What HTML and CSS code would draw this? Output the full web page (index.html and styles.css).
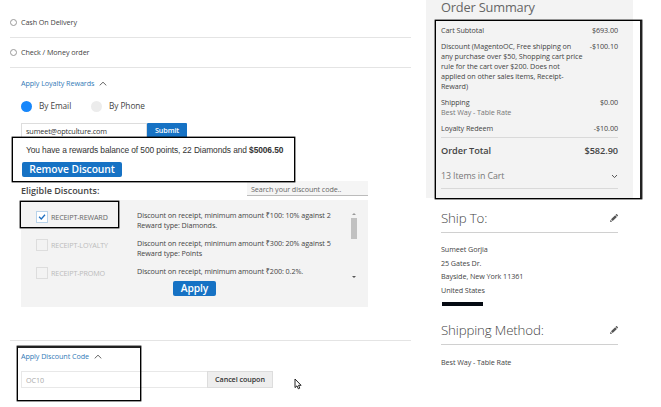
FILE: index.html
```html
<!DOCTYPE html>
<html lang="en">
<head>
<meta charset="utf-8">
<title>Checkout</title>
<link rel="stylesheet" href="styles.css">
</head>
<body>
<div class="page">
  <main class="payment">
    <label class="method first"><span class="radio"></span>Cash On Delivery</label>
    <label class="method"><span class="radio"></span>Check / Money order</label>
    <section class="loyalty">
      <h3 class="toggle">Apply Loyalty Rewards <svg class="caret" viewBox="0 0 8 5"><path d="M.7 4.4 4 1.2l3.3 3.2"/></svg></h3>
      <div class="choices">
        <span class="dot on"></span><span class="by-email">By Email</span>
        <span class="dot"></span><span class="by-phone">By Phone</span>
      </div>
      <div class="email-row">
        <div class="field">sumeet@optculture.com</div>
        <div class="btn submit">Submit</div>
      </div>
      <p class="balance">You have a rewards balance of 500 points, 22 Diamonds and <b>$5006.50</b></p>
      <div class="btn remove">Remove Discount</div>
      <div class="eligible-head">
        <h4>Eligible Discounts:</h4>
        <div class="search">Search your discount code..</div>
      </div>
      <div class="panel">
        <div class="list">
          <div class="rewards">
            <div class="reward active">
              <span class="check"><svg viewBox="0 0 11 11"><path d="M2.3 5.2 4.7 7.7 8.8 3"/></svg></span>
              <span class="name">RECEIPT-REWARD</span>
              <p>Discount on receipt, minimum amount ₹100: 10% against 2<br>Reward type: Diamonds.</p>
            </div>
            <div class="reward">
              <span class="check"></span><span class="name">RECEIPT-LOYALTY</span>
              <p>Discount on receipt, minimum amount ₹300: 20% against 5<br>Reward type: Points</p>
            </div>
            <div class="reward">
              <span class="check"></span><span class="name">RECEIPT-PROMO</span>
              <p>Discount on receipt, minimum amount ₹200: 0.2%.</p>
            </div>
          </div>
          <div class="scroll"><i class="up"></i><i class="thumb"></i><i class="down"></i></div>
        </div>
        <div class="btn apply">Apply</div>
      </div>
    </section>
    <section class="coupon">
      <h3 class="toggle code">Apply Discount Code <svg class="caret" viewBox="0 0 8 5"><path d="M.7 4.4 4 1.2l3.3 3.2"/></svg></h3>
      <div class="coupon-row">
        <div class="coupon-field">OC10</div>
        <div class="cancel">Cancel coupon</div>
      </div>
    </section>
  </main>
  <aside class="side">
    <section class="summary">
      <h2>Order Summary</h2>
      <div class="line"><span>Cart Subtotal</span><span>$693.00</span></div>
      <div class="line"><span>Discount (MagentoOC, Free shipping on<br>any purchase over $50, Shopping cart price<br>rule for the cart over $200. Does not<br>applied on other sales items, Receipt-<br>Reward)</span><span>-$100.10</span></div>
      <div class="line"><span>Shipping<br><em>Best Way - Table Rate</em></span><span>$0.00</span></div>
      <div class="line"><span>Loyalty Redeem</span><span>-$10.00</span></div>
      <div class="total"><span>Order Total</span><span>$582.90</span></div>
      <div class="items"><span>13 Items in Cart</span><svg class="chevron" viewBox="0 0 7 5"><path d="M1 1l2.5 2.6L6 1"/></svg></div>
    </section>
    <section class="block">
      <h2>Ship To:<svg class="pencil" viewBox="0 0 8 8"><path d="M0 8 .6 5.8 2.2 7.4zM1 5.3 5.2 1.2 6.9 2.9 2.7 7zM5.6.8 6.3.1Q6.6-.1 6.9.2L7.8 1.1Q8.1 1.4 7.9 1.7L7.2 2.4z"/></svg></h2>
      <address>Sumeet Gorjia<br>25 Gates Dr.<br>Bayside, New York 11361<br>United States<span class="redacted"></span></address>
    </section>
    <section class="block shipping">
      <h2>Shipping Method:<svg class="pencil" viewBox="0 0 8 8"><path d="M0 8 .6 5.8 2.2 7.4zM1 5.3 5.2 1.2 6.9 2.9 2.7 7zM5.6.8 6.3.1Q6.6-.1 6.9.2L7.8 1.1Q8.1 1.4 7.9 1.7L7.2 2.4z"/></svg></h2>
      <p>Best Way - Table Rate</p>
    </section>
  </aside>
</div>
<div class="mark mark-balance"></div>
<div class="mark mark-reward"></div>
<div class="mark mark-code"></div>
<div class="mark mark-summary"></div>
<svg class="cursor" viewBox="0 0 8 12"><path d="M1 1v8.6l2-1.8 1.3 3 1.5-.7-1.3-2.8h2.6z"/></svg>
</body>
</html>
```
FILE: styles.css
```css
* { box-sizing: border-box; margin: 0; padding: 0; }
body {
  width: 661px; height: 407px; overflow: hidden; position: relative;
  background: #fff; color: #444; white-space: nowrap; letter-spacing: -0.075px;
  font: 7.2px/10.1px "Open Sans", "Noto Sans", sans-serif;
}
.page { display: flex; height: 407px; }

.payment { width: 401px; margin-left: 10px; }
.method { display: flex; align-items: center; height: 30px; border-bottom: 1px solid #e4e4e4; }
.method.first { height: 38px; padding-top: 7px; }
.radio { width: 7px; height: 7px; margin-right: 4px; border: 1px solid #999; border-radius: 50%; }

.loyalty { padding-left: 11px; height: 262px; }
.toggle { display: flex; align-items: center; gap: 5px; height: 10px; color: #337ab7; font-size: 7.2px; font-weight: 400; }
.caret { width: 8px; height: 5px; fill: none; stroke: #666; stroke-width: 1; }
.loyalty .toggle { margin-top: 10px; }
.choices { display: flex; align-items: center; height: 11px; margin-top: 13px; font-size: 8.3px; }
.dot { width: 11px; height: 11px; border-radius: 50%; background: #ececec; }
.dot.on { background: #1787fb; }
.by-email { width: 52px; margin-left: 7px; }
.by-phone { margin-left: 7px; }
.email-row { display: flex; height: 15px; margin-top: 11px; }
.field { width: 126px; padding: 2px 0 0 4px; border: 1px solid #ddd; font-size: 7.3px; letter-spacing: -0.15px; color: #333; }
.btn { display: flex; align-items: center; justify-content: center; background: #1672c4; color: #fff; border-radius: 2px; font-weight: 600; }
.submit { width: 40px; font-size: 7.2px; border-radius: 1px; }
.balance { height: 12px; margin-top: 6px; padding-left: 5px; font: 8.4px/12px "Liberation Sans", sans-serif; letter-spacing: -0.09px; color: #333; }
.remove { width: 100px; height: 15px; margin-top: 6px; margin-left: 1px; font-size: 10.3px; }
.eligible-head { display: flex; justify-content: space-between; width: 347px; height: 15px; margin-top: 4px; }
.eligible-head h4 { font-size: 9px; line-height: 20px; font-weight: 600; letter-spacing: 0; }
.search { width: 121px; padding: 3px 0 0 4px; background: #f5f5f5; border-bottom: 1px solid #bbb; color: #666; }
.panel { width: 347px; height: 107px; margin-top: 4px; padding-top: 10px; background: #f3f3f3; }
.list { display: flex; height: 71px; justify-content: space-between; }
.rewards { width: 320px; padding-left: 15px; }
.reward { display: flex; height: 28px; color: #bbb; }
.check { width: 12px; height: 12px; margin: 1px 3px 0 0; border: 1px solid #ddd; }
.active .check { border-color: #b9d3ea; background: #fff; }
.check svg { display: block; width: 10px; height: 10px; fill: none; stroke: #1e6fc0; stroke-width: 1.4; }
.name { width: 86px; padding-top: 2px; letter-spacing: -0.15px; }
.active .name { color: #666; }
.reward p { color: #444; }
.scroll { display: flex; flex-direction: column; align-items: center; width: 6px; margin-right: 11px; padding-top: 3px; }
.up { border: 2px solid transparent; border-top: 0; border-bottom: 2px solid #999; }
.thumb { width: 6px; height: 21px; margin-top: 3px; background: #c1c1c1; }
.down { margin-top: 37px; border: 2px solid transparent; border-bottom: 0; border-top: 2px solid #555; }
.apply { width: 43px; height: 15px; margin-left: 152px; font-size: 10.3px; }

.coupon { height: 67px; border-top: 1px solid #e4e4e4; padding: 10px 0 0 11px; }
.coupon-row { display: flex; height: 17px; margin-top: 10px; }
.coupon-field { width: 186px; padding: 3px 0 0 4px; border: 1px solid #e8e8e8; border-right: 0; color: #aaa; }
.cancel { width: 66px; border: 1px solid #ddd; background: #eee; color: #333; font-weight: 600; text-align: center; line-height: 15px; }

.side { width: 207px; margin-left: 15px; }
.summary { height: 198px; padding: 0 15px; background: #f3f3f3; }
.summary h2 { height: 25px; font-size: 12.8px; line-height: 15px; font-weight: 400; letter-spacing: -0.17px; color: #666; }
.line { display: flex; justify-content: space-between; margin-bottom: 5.9px; }
.line em { font-style: normal; color: #777; }
.total { display: flex; justify-content: space-between; height: 27px; margin-top: -2px; border-top: 1px solid #d9d9d9; font-size: 9.2px; font-weight: 600; line-height: 25px; }
.items { display: flex; align-items: center; justify-content: space-between; height: 25px; border-bottom: 1px solid #d9d9d9; font-size: 8.8px; color: #777; }
.chevron { width: 7px; height: 5px; fill: none; stroke: #555; stroke-width: 1; }

.block { height: 112px; padding: 0 15px; }
.block h2 { display: flex; align-items: center; justify-content: space-between; height: 35px; padding-top: 6px; border-bottom: 1px solid #d0d0d0; font-size: 13.3px; font-weight: 300; letter-spacing: -0.15px; color: #444; }
.pencil { width: 8px; height: 8px; fill: #555; }
address { padding-top: 10px; font-style: normal; line-height: 13.7px; }
.redacted { display: block; width: 41px; height: 4px; margin: 4px 0 0 1px; background: #050a12; }
.shipping p { padding-top: 12px; }

.mark { position: absolute; border: 1.5px solid #000; box-shadow: 0 0 0 0.4px #000; }
.mark-balance { left: 12px; top: 137px; width: 283px; height: 45px; }
.mark-reward { left: 20px; top: 201px; width: 99px; height: 27px; }
.mark-code { left: 17px; top: 346px; width: 124px; height: 55px; border-top: 2px solid #222; }
.mark-summary { left: 435px; top: 20px; width: 207px; height: 179px; border-right: 2px solid #222; }
.cursor { position: absolute; left: 294px; top: 378px; width: 8px; height: 12px; fill: #fff; stroke: #222; stroke-width: 1; }
```
